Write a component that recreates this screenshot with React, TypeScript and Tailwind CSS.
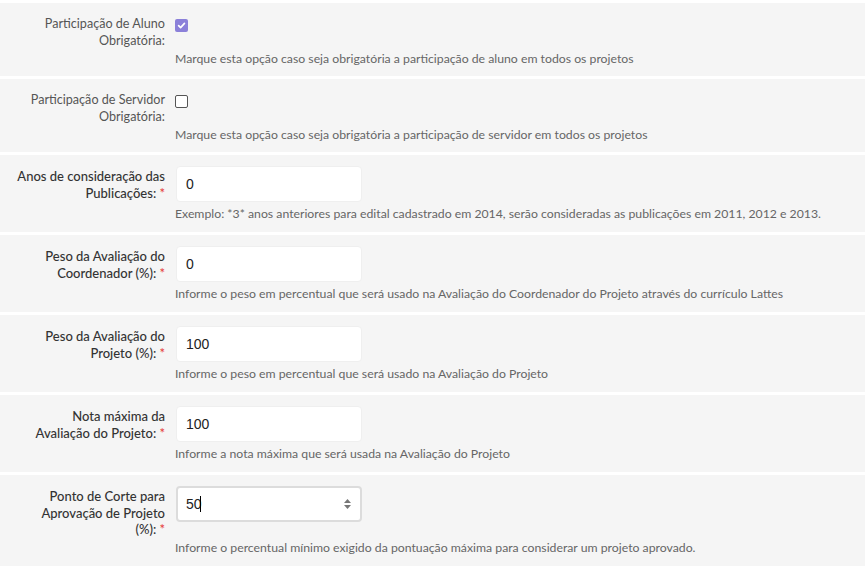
import { ReactNode } from "react";

interface Field {
  label: ReactNode;
  required?: boolean;
  kind: "check" | "input";
  checked?: boolean;
  value?: string;
  focused?: boolean;
  help: string;
}

const fields: Field[] = [
  {
    label: <>Participação de Aluno<br />Obrigatória:</>,
    kind: "check",
    checked: true,
    help: "Marque esta opção caso seja obrigatória a participação de aluno em todos os projetos",
  },
  {
    label: <>Participação de Servidor<br />Obrigatória:</>,
    kind: "check",
    checked: false,
    help: "Marque esta opção caso seja obrigatória a participação de servidor em todos os projetos",
  },
  {
    label: <>Anos de consideração das<br />Publicações:</>,
    required: true,
    kind: "input",
    value: "0",
    help: "Exemplo: *3* anos anteriores para edital cadastrado em 2014, serão consideradas as publicações em 2011, 2012 e 2013.",
  },
  {
    label: <>Peso da Avaliação do<br />Coordenador (%):</>,
    required: true,
    kind: "input",
    value: "0",
    help: "Informe o peso em percentual que será usado na Avaliação do Coordenador do Projeto através do currículo Lattes",
  },
  {
    label: <>Peso da Avaliação do<br />Projeto (%):</>,
    required: true,
    kind: "input",
    value: "100",
    help: "Informe o peso em percentual que será usado na Avaliação do Projeto",
  },
  {
    label: <>Nota máxima da<br />Avaliação do Projeto:</>,
    required: true,
    kind: "input",
    value: "100",
    help: "Informe a nota máxima que será usada na Avaliação do Projeto",
  },
  {
    label: <>Ponto de Corte para<br />Aprovação de Projeto<br />(%):</>,
    required: true,
    kind: "input",
    value: "50",
    focused: true,
    help: "Informe o percentual mínimo exigido da pontuação máxima para considerar um projeto aprovado.",
  },
];

function CheckBox({ checked }: { checked?: boolean }) {
  if (checked) {
    return (
      <span className="mt-[5px] flex h-[13px] w-[13px] items-center justify-center rounded-[2px] bg-[#8b80d9]">
        <svg width="9" height="9" viewBox="0 0 10 10">
          <path d="M1.8 5.2 L4 7.4 L8.3 2.6" fill="none" stroke="#fff" strokeWidth="1.8" strokeLinecap="round" strokeLinejoin="round" />
        </svg>
      </span>
    );
  }
  return <span className="mt-[5px] block h-[13px] w-[13px] rounded-[2px] border border-[#555] bg-white" />;
}

export default function App() {
  return (
    <div className="flex min-h-[569px] flex-col gap-[3px] bg-white pt-[3px] font-['Lato',sans-serif]">
      {fields.map((f, i) => (
        <div key={i} className={`bg-[#f5f5f5] pt-[11px] ${f.kind === "check" ? "pb-[9px]" : "pb-[10px]"}`}>
          <div className="flex">
            <label
              className={`w-[165px] shrink-0 pt-[2px] text-right leading-[16.5px] ${
                f.kind === "check" ? "text-[12.6px] text-[#555]" : "text-[13px] font-medium text-[#333]"
              }`}
            >
              {f.label}
              {f.required && <span className="text-[#e53935]"> *</span>}
            </label>
            <div className="pl-[10px]">
              {f.kind === "check" ? (
                <CheckBox checked={f.checked} />
              ) : (
                <div className="relative mb-[2px]">
                  <input
                    readOnly
                    value={f.value}
                    className={`ml-px block h-[36px] w-[186px] rounded-[4px] bg-white font-['Liberation_Sans',sans-serif] text-[14px] text-[#222] outline-none ${
                      f.focused ? "border-2 border-[#dcdcdc] px-[8px]" : "border border-[#efefef] px-[9px]"
                    }`}
                  />
                  {f.focused && (
                    <>
                      <span className="absolute left-[25px] top-[10px] h-[16px] w-px bg-black" />
                      <svg className="absolute right-[10px] top-[12px]" width="9" height="12" viewBox="0 0 9 12">
                        <path d="M1 5 L4.5 1 L8 5 Z" fill="#777" />
                        <path d="M1 7 L4.5 11 L8 7 Z" fill="#777" />
                      </svg>
                    </>
                  )}
                </div>
              )}
            </div>
          </div>
          <p className="mt-[2px] pl-[175px] text-[12.25px] leading-[16px] text-[#666]">{f.help}</p>
        </div>
      ))}
    </div>
  );
}
